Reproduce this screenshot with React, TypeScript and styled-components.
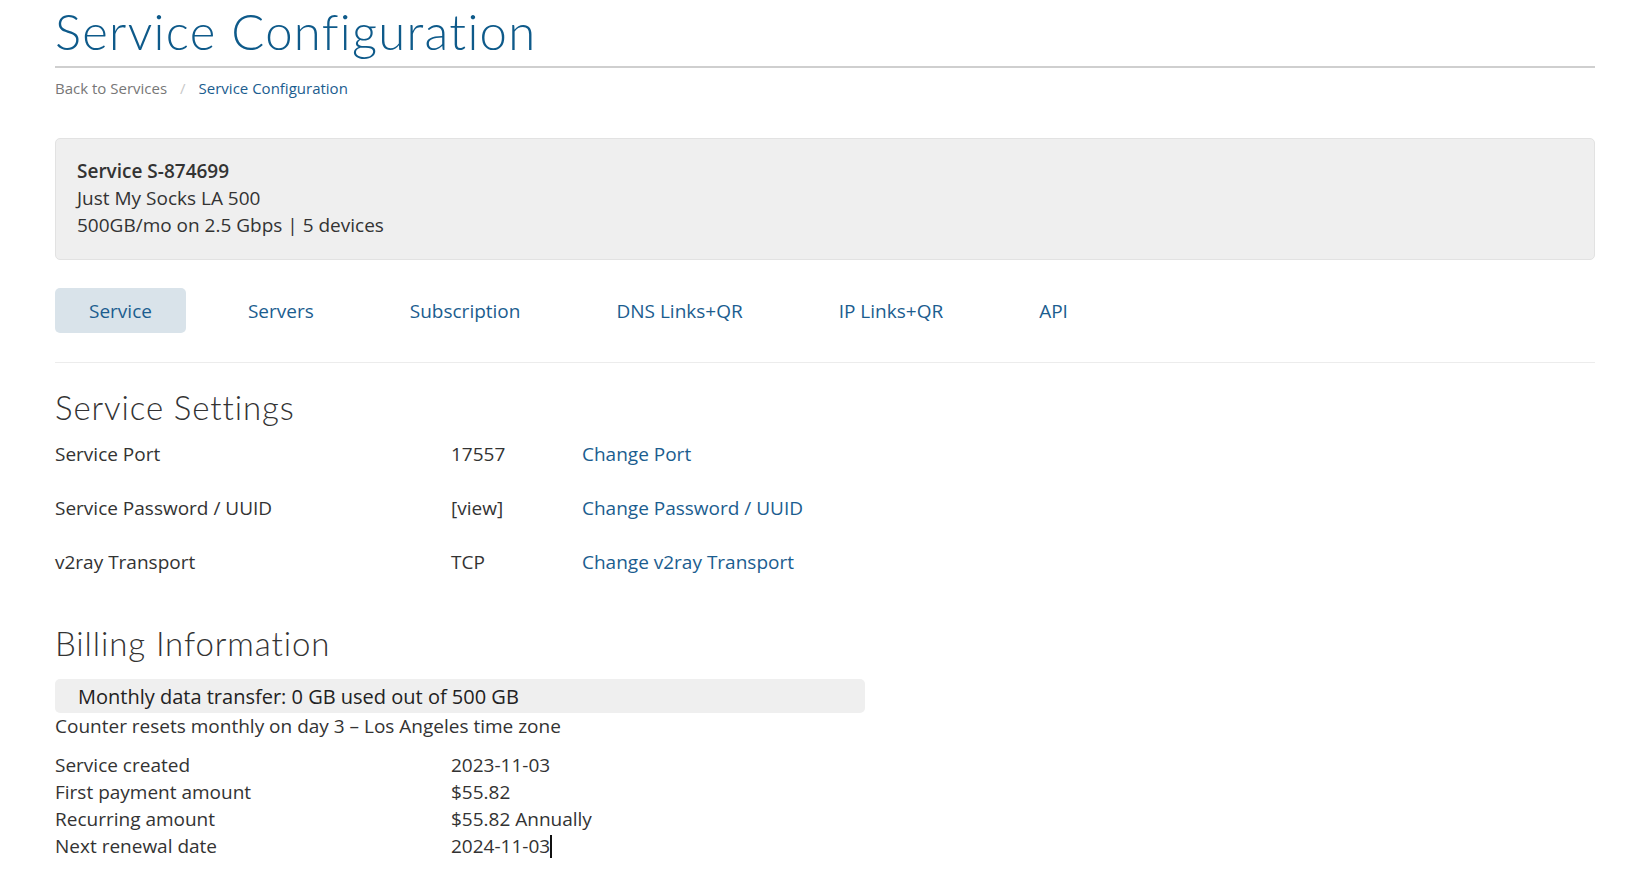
import React from "react";
import styled, { createGlobalStyle } from "styled-components";

const Global = createGlobalStyle`
  html, body { margin: 0; padding: 0; background: #fff; }
  body { font-family: "Open Sans", "Liberation Sans", sans-serif; color: #333; }
  * { box-sizing: border-box; }
`;

const Page = styled.div`
  width: 1540px;
  margin-left: 55px;
  display: flex;
  flex-direction: column;
`;

const Title = styled.h1`
  margin: 0;
  padding-top: 4px;
  padding-bottom: 7px;
  font-family: Lato, "Open Sans", sans-serif;
  font-weight: 300;
  font-size: 49px;
  line-height: 55px;
  letter-spacing: 1.3px;
  color: #0e5a8a;
  border-bottom: 2px solid #cfcfcf;
`;

const Crumbs = styled.nav`
  display: flex;
  align-items: center;
  gap: 13px;
  margin-top: 10px;
  font-size: 15px;
  line-height: 20px;
  color: #777;
`;

const CrumbSep = styled.span`
  color: #c8c8c8;
`;

const CrumbActive = styled.span`
  color: #1b5d8f;
`;

const InfoBox = styled.div`
  margin-top: 40px;
  background: #efefef;
  border: 1px solid #e2e2e2;
  border-radius: 5px;
  padding: 19px 21px 20px;
  font-size: 19px;
  line-height: 27px;
  color: #333;
`;

const InfoTitle = styled.div`
  font-weight: 600;
`;

const Tabs = styled.div`
  display: flex;
  gap: 28px;
  margin-top: 28px;
  padding-bottom: 29px;
  border-bottom: 1px solid #ececec;
`;

const Tab = styled.div<{ $active?: boolean }>`
  padding: 0 34px;
  height: 45px;
  display: flex;
  align-items: center;
  border-radius: 5px;
  font-size: 19px;
  color: #1b5d8f;
  background: ${(p) => (p.$active ? "#d9e3ea" : "transparent")};
`;

const SectionTitle = styled.h2<{ $top: number }>`
  margin: ${(p) => p.$top}px 0 14px;
  font-family: Lato, "Open Sans", sans-serif;
  font-weight: 300;
  font-size: 33px;
  line-height: 40px;
  letter-spacing: 0.9px;
  color: #333;
`;

const SettingsGrid = styled.div`
  display: grid;
  grid-template-columns: 396px 131px auto;
  grid-auto-rows: 54px;
  font-size: 19px;
  line-height: 27px;
  align-items: start;
`;

const Link = styled.a`
  color: #1b5d8f;
  text-decoration: none;
`;

const UsageBar = styled.div`
  margin-top: 2px;
  width: 810px;
  height: 34px;
  background: #efefef;
  border-radius: 5px;
  padding-left: 23px;
  display: flex;
  align-items: center;
  font-size: 20px;
  color: #222;
`;

const Note = styled.div`
  font-size: 19px;
  line-height: 27px;
`;

const BillingGrid = styled.div`
  display: grid;
  grid-template-columns: 396px auto;
  margin-top: 12px;
  font-size: 19px;
  line-height: 27px;
`;

const Caret = styled.span`
  display: inline-block;
  width: 2px;
  height: 23px;
  background: #111;
  vertical-align: -5px;
`;

export default function App() {
  return (
    <>
      <Global />
      <Page>
        <Title>Service Configuration</Title>
        <Crumbs>
          <span>Back to Services</span>
          <CrumbSep>/</CrumbSep>
          <CrumbActive>Service Configuration</CrumbActive>
        </Crumbs>
        <InfoBox>
          <InfoTitle>Service S-874699</InfoTitle>
          <div>Just My Socks LA 500</div>
          <div>500GB/mo on 2.5 Gbps | 5 devices</div>
        </InfoBox>
        <Tabs>
          <Tab $active>Service</Tab>
          <Tab>Servers</Tab>
          <Tab>Subscription</Tab>
          <Tab>DNS Links+QR</Tab>
          <Tab>IP Links+QR</Tab>
          <Tab>API</Tab>
        </Tabs>
        <SectionTitle $top={24}>Service Settings</SectionTitle>
        <SettingsGrid>
          <span>Service Port</span>
          <span>17557</span>
          <Link>Change Port</Link>
          <span>Service Password / UUID</span>
          <span>[view]</span>
          <Link>Change Password / UUID</Link>
          <span>v2ray Transport</span>
          <span>TCP</span>
          <Link>Change v2ray Transport</Link>
        </SettingsGrid>
        <SectionTitle $top={20}>Billing Information</SectionTitle>
        <UsageBar>Monthly data transfer: 0 GB used out of 500 GB</UsageBar>
        <Note>Counter resets monthly on day 3 – Los Angeles time zone</Note>
        <BillingGrid>
          <span>Service created</span>
          <span>2023-11-03</span>
          <span>First payment amount</span>
          <span>$55.82</span>
          <span>Recurring amount</span>
          <span>$55.82 Annually</span>
          <span>Next renewal date</span>
          <span>
            2024-11-03
            <Caret />
          </span>
        </BillingGrid>
      </Page>
    </>
  );
}
